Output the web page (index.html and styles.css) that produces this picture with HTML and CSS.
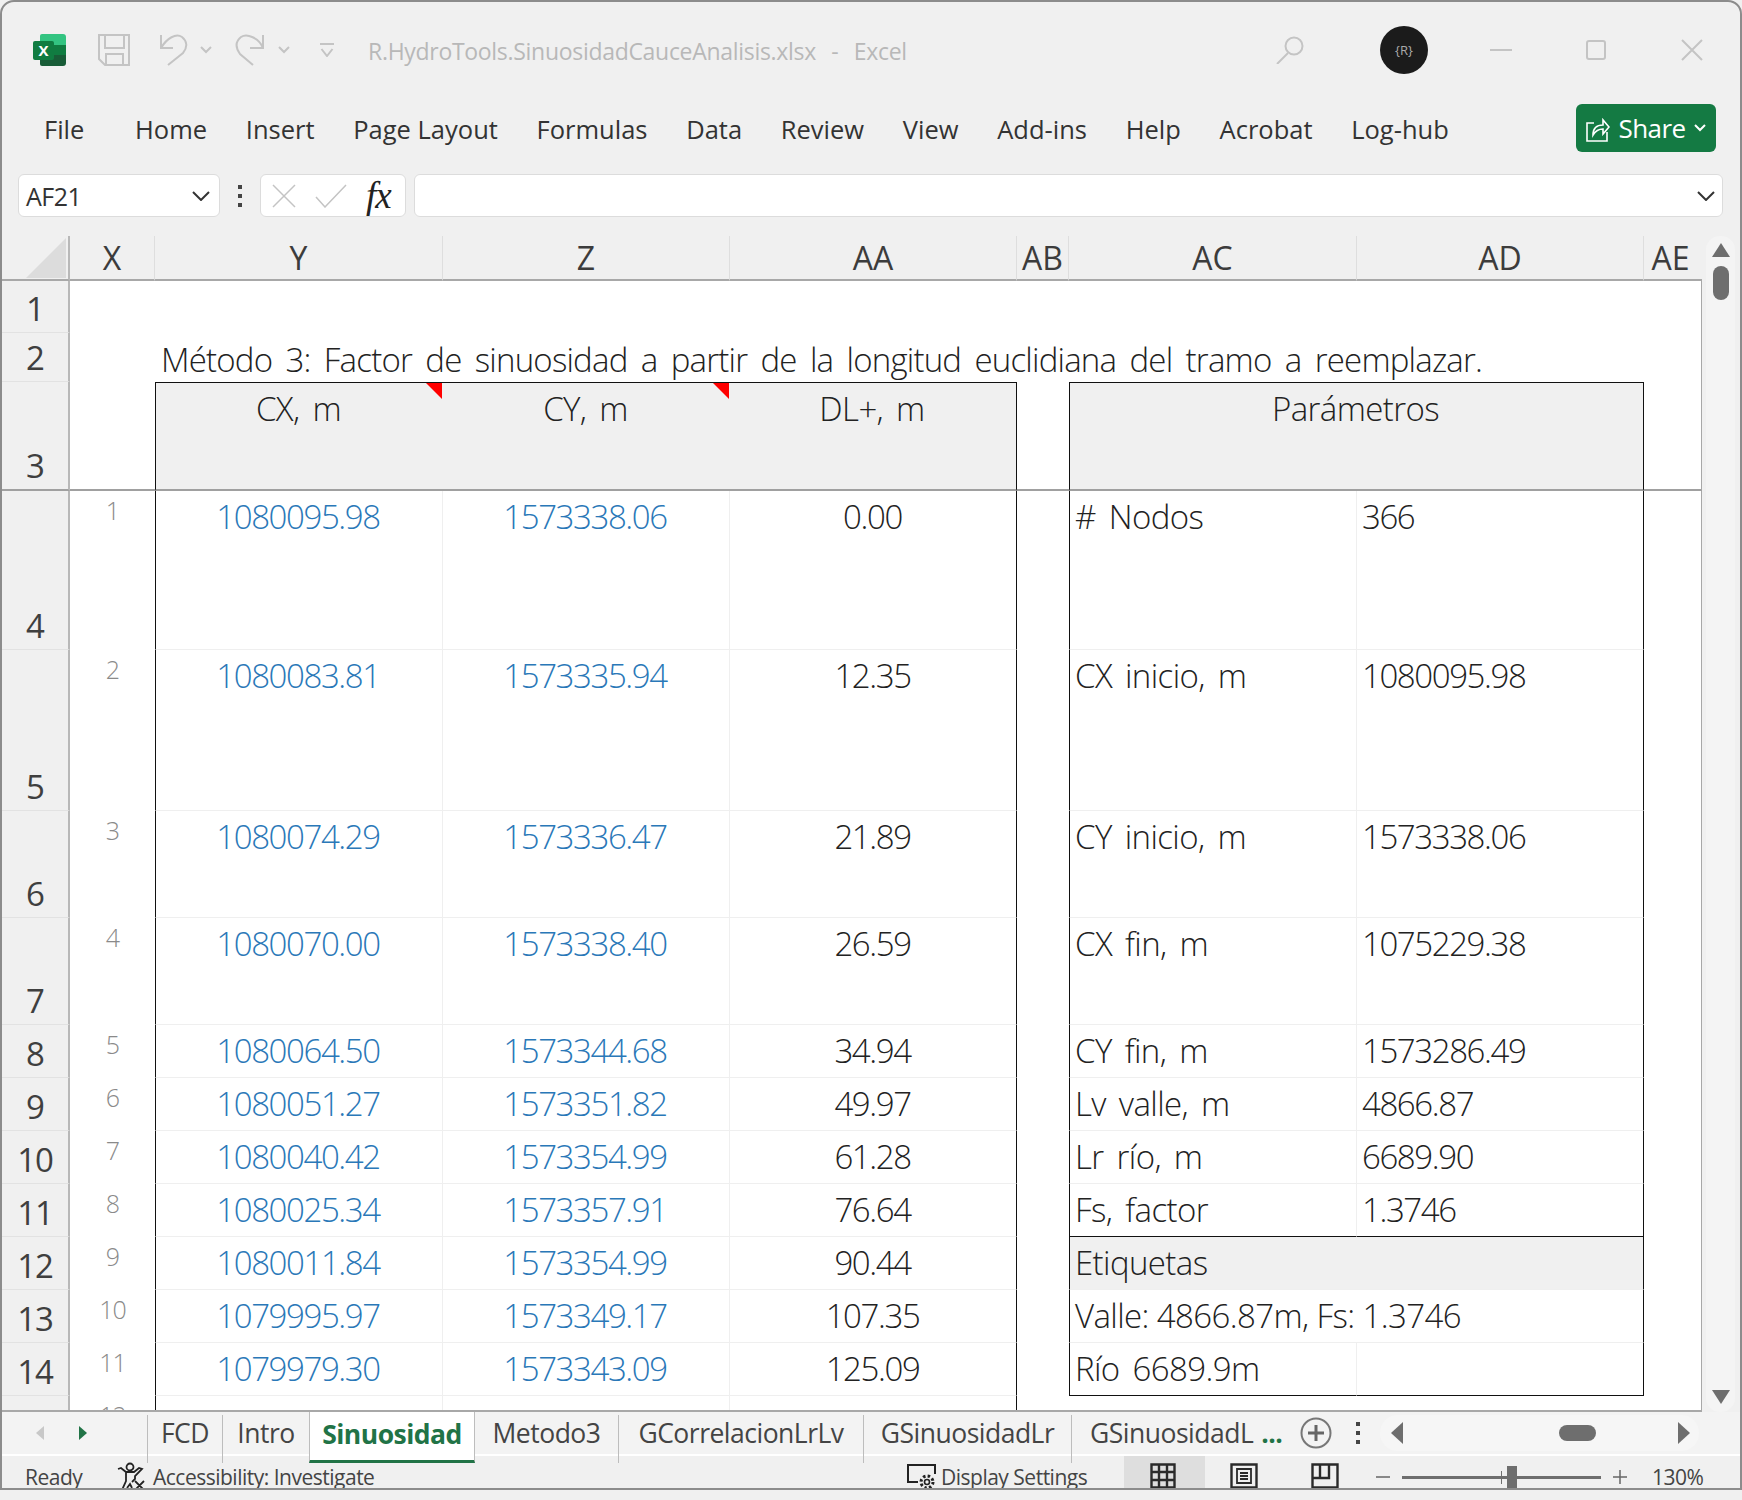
FILE: index.html
```html
<!DOCTYPE html>
<html lang="en">
<head>
<meta charset="utf-8">
<title>Excel</title>
<link rel="stylesheet" href="styles.css">
</head>
<body>
<div class="window">
  <header class="titlebar">
    <svg class="i-excel" viewBox="0 0 34 34" width="34" height="34"><path d="M7 3a2 2 0 0 1 2-2h21a3 3 0 0 1 3 3v8H7z" fill="#33c481"/><rect x="7" y="12" width="26" height="10" fill="#21a366"/><path d="M7 22h26v8a3 3 0 0 1-3 3H9a2 2 0 0 1-2-2z" fill="#185c37"/><rect x="21" y="12" width="12" height="10" fill="#107c41"/><rect x="0" y="8" width="21" height="19" rx="2" fill="#107c41"/><text x="10.500" y="23" text-anchor="middle" class="x-letter">X</text></svg>
    <svg class="i-save" viewBox="0 0 32 32" width="32" height="32"><path d="M1 1h30v30H7l-6-6z M7 1v13h19V1 M8 31V20h17v11" fill="none" stroke="#c4c4c4" stroke-width="2"/></svg>
    <svg class="i-undo" viewBox="0 0 30 32" width="30" height="32"><path d="M3 1v13h12M3 14C9 4 18-1 24 3c5 4 6 10 1 16L10 31" fill="none" stroke="#c4c4c4" stroke-width="2"/></svg>
    <svg class="i-chev" viewBox="0 0 12 8" width="12" height="8"><path d="M1 1l5 5 5-5" fill="none" stroke="#c4c4c4" stroke-width="2"/></svg>
    <svg class="i-redo" viewBox="0 0 30 32" width="30" height="32"><path d="M28 1v13H15M28 14C24 4 12-1 6 3 1 7 0 13 5 20l13 11" fill="none" stroke="#c4c4c4" stroke-width="2"/></svg>
    <svg class="i-chev" viewBox="0 0 12 8" width="12" height="8"><path d="M1 1l5 5 5-5" fill="none" stroke="#c4c4c4" stroke-width="2"/></svg>
    <svg class="i-custom" viewBox="0 0 14 14" width="14" height="14"><path d="M0 1h14M1.500 6L7 13l5.500-7" fill="none" stroke="#c4c4c4" stroke-width="2"/></svg>
    <div class="doc-title">R.HydroTools.SinuosidadCauceAnalisis.xlsx&nbsp; - &nbsp;Excel</div>
    <svg class="i-search" viewBox="0 0 28 28" width="28" height="28"><circle cx="18" cy="10" r="8.500" fill="none" stroke="#c4c4c4" stroke-width="2"/><path d="M12 17L1 28" stroke="#c4c4c4" stroke-width="2"/></svg>
    <div class="avatar">{R}</div>
    <svg class="i-min" viewBox="0 0 22 2" width="22" height="2"><rect width="22" height="2" fill="#c4c4c4"/></svg>
    <svg class="i-max" viewBox="0 0 20 20" width="20" height="20"><rect x="1" y="1" width="18" height="18" rx="2" fill="none" stroke="#c4c4c4" stroke-width="2"/></svg>
    <svg class="i-close" viewBox="0 0 22 22" width="22" height="22"><path d="M1 1l20 20M21 1L1 21" stroke="#c4c4c4" stroke-width="2"/></svg>
  </header>

  <nav class="ribbon">
    <span class="tab tab-file">File</span>
    <span class="tab">Home</span>
    <span class="tab">Insert</span>
    <span class="tab">Page Layout</span>
    <span class="tab">Formulas</span>
    <span class="tab">Data</span>
    <span class="tab">Review</span>
    <span class="tab">View</span>
    <span class="tab">Add-ins</span>
    <span class="tab">Help</span>
    <span class="tab">Acrobat</span>
    <span class="tab">Log-hub</span>
    <button class="share">
      <svg viewBox="0 0 24 28" width="24" height="28"><path d="M8 9H1v18h20v-9" fill="none" stroke="#fff" stroke-width="1.600"/><path d="M7 21c0-7 4-10 10-10V6l6 7-6 7v-5c-4 0-7 1-10 6z" fill="none" stroke="#fff" stroke-width="1.600"/></svg>
      <span>Share</span>
      <svg viewBox="0 0 12 8" width="12" height="8"><path d="M1 1l5 5 5-5" fill="none" stroke="#fff" stroke-width="2"/></svg>
    </button>
  </nav>

  <div class="formula">
    <div class="namebox"><span>AF21</span><svg viewBox="0 0 18 10" width="18" height="10"><path d="M1 1l8 8 8-8" fill="none" stroke="#333" stroke-width="2"/></svg></div>
    <div class="vdots"><i></i><i></i><i></i></div>
    <div class="fxbox">
      <svg viewBox="0 0 24 24" width="24" height="24"><path d="M1 1l22 22M23 1L1 23" stroke="#c4c4c4" stroke-width="1.500"/></svg>
      <svg viewBox="0 0 32 24" width="32" height="24"><path d="M1 13l9 10L31 1" fill="none" stroke="#c4c4c4" stroke-width="1.500"/></svg>
      <span class="fx">fx</span>
    </div>
    <div class="input"><svg viewBox="0 0 18 10" width="18" height="10"><path d="M1 1l8 8 8-8" fill="none" stroke="#333" stroke-width="2"/></svg></div>
  </div>

  <main class="sheet-area">
    <div class="grid-wrap">
      <table class="grid">
        <colgroup><col class="c-rh"><col class="c-x"><col class="c-y"><col class="c-z"><col class="c-aa"><col class="c-ab"><col class="c-ac"><col class="c-ad"><col class="c-ae"></colgroup>
        <thead>
          <tr class="h-head"><th class="corner"></th><th>X</th><th>Y</th><th>Z</th><th>AA</th><th>AB</th><th>AC</th><th>AD</th><th>AE</th></tr>
        </thead>
        <tbody>
          <tr class="h52"><th class="rh">1</th><td colspan="8"></td></tr>
          <tr class="h49"><th class="rh">2</th><td></td><td colspan="7"><div class="title-cell">Método 3: Factor de sinuosidad a partir de la longitud euclidiana del tramo a reemplazar.</div></td></tr>
          <tr class="h109 frozen">
            <th class="rh">3</th><td></td>
            <td class="hd bl bt note">CX, m</td><td class="hd bt note">CY, m</td><td class="hd bt br">DL+, m</td>
            <td></td>
            <td class="hd bl bt br" colspan="2">Parámetros</td>
            <td></td>
          </tr>
          <tr class="h159"><th class="rh">4</th><td class="ix">1</td><td class="n bl">1080095.98</td><td class="n">1573338.06</td><td class="d br">0.00</td><td></td><td class="p bl"># Nodos</td><td class="p num br">366</td><td></td></tr>
          <tr class="h161"><th class="rh">5</th><td class="ix">2</td><td class="n bl">1080083.81</td><td class="n">1573335.94</td><td class="d br">12.35</td><td></td><td class="p bl">CX inicio, m</td><td class="p num br">1080095.98</td><td></td></tr>
          <tr class="h107"><th class="rh">6</th><td class="ix">3</td><td class="n bl">1080074.29</td><td class="n">1573336.47</td><td class="d br">21.89</td><td></td><td class="p bl">CY inicio, m</td><td class="p num br">1573338.06</td><td></td></tr>
          <tr class="h107"><th class="rh">7</th><td class="ix">4</td><td class="n bl">1080070.00</td><td class="n">1573338.40</td><td class="d br">26.59</td><td></td><td class="p bl">CX fin, m</td><td class="p num br">1075229.38</td><td></td></tr>
          <tr class="h53"><th class="rh">8</th><td class="ix">5</td><td class="n bl">1080064.50</td><td class="n">1573344.68</td><td class="d br">34.94</td><td></td><td class="p bl">CY fin, m</td><td class="p num br">1573286.49</td><td></td></tr>
          <tr class="h53"><th class="rh">9</th><td class="ix">6</td><td class="n bl">1080051.27</td><td class="n">1573351.82</td><td class="d br">49.97</td><td></td><td class="p bl">Lv valle, m</td><td class="p num br">4866.87</td><td></td></tr>
          <tr class="h53"><th class="rh">10</th><td class="ix">7</td><td class="n bl">1080040.42</td><td class="n">1573354.99</td><td class="d br">61.28</td><td></td><td class="p bl">Lr río, m</td><td class="p num br">6689.90</td><td></td></tr>
          <tr class="h53"><th class="rh">11</th><td class="ix">8</td><td class="n bl">1080025.34</td><td class="n">1573357.91</td><td class="d br">76.64</td><td></td><td class="p bl bb">Fs, factor</td><td class="p num br bb">1.3746</td><td></td></tr>
          <tr class="h53"><th class="rh">12</th><td class="ix">9</td><td class="n bl">1080011.84</td><td class="n">1573354.99</td><td class="d br">90.44</td><td></td><td class="p bl br shade" colspan="2">Etiquetas</td><td></td></tr>
          <tr class="h53"><th class="rh">13</th><td class="ix">10</td><td class="n bl">1079995.97</td><td class="n">1573349.17</td><td class="d br">107.35</td><td></td><td class="p tight bl br" colspan="2">Valle: 4866.87m, Fs: 1.3746</td><td></td></tr>
          <tr class="h53"><th class="rh">14</th><td class="ix">11</td><td class="n bl">1079979.30</td><td class="n">1573343.09</td><td class="d br">125.09</td><td></td><td class="p bl bb">Río 6689.9m</td><td class="p br bb"></td><td></td></tr>
          <tr class="h53"><th class="rh"></th><td class="ix">12</td><td class="n bl">1079959.16</td><td class="n">1573336.56</td><td class="d br">146.46</td><td></td><td></td><td></td><td></td></tr>
        </tbody>
      </table>
    </div>
    <aside class="vscroll">
      <div class="vtrack">
        <svg viewBox="0 0 18 14" width="18" height="14"><path d="M9 0l9 14H0z" fill="#6e6e6e"/></svg>
        <div class="vthumb"></div>
        <svg class="vdown" viewBox="0 0 18 14" width="18" height="14"><path d="M0 0h18L9 14z" fill="#6e6e6e"/></svg>
      </div>
    </aside>
  </main>

  <div class="tabbar">
    <div class="tabnav">
      <svg viewBox="0 0 8 14" width="8" height="14"><path d="M8 0v14L0 7z" fill="#c8c8c8"/></svg>
      <svg viewBox="0 0 8 14" width="8" height="14"><path d="M0 0v14l8-7z" fill="#217346"/></svg>
    </div>
    <div class="sheets">
      <span class="stab">FCD</span>
      <span class="stab">Intro</span>
      <span class="stab active">Sinuosidad</span>
      <span class="stab">Metodo3</span>
      <span class="stab">GCorrelacionLrLv</span>
      <span class="stab">GSinuosidadLr</span>
      <span class="stab last">GSinuosidadL <b>...</b></span>
    </div>
    <svg class="addsheet" viewBox="0 0 32 32" width="32" height="32"><circle cx="16" cy="16" r="14.500" fill="none" stroke="#777" stroke-width="2"/><path d="M16 8v16M8 16h16" stroke="#666" stroke-width="3"/></svg>
    <div class="vdots tabdots"><i></i><i></i><i></i></div>
    <div class="hscroll">
      <svg viewBox="0 0 12 22" width="12" height="22"><path d="M12 0v22L0 11z" fill="#6e6e6e"/></svg>
      <div class="hthumb"></div>
      <svg viewBox="0 0 12 22" width="12" height="22"><path d="M0 0v22l12-11z" fill="#6e6e6e"/></svg>
    </div>
  </div>

  <footer class="status">
    <span class="ready">Ready</span>
    <svg class="i-access" viewBox="0 0 30 30" width="30" height="30"><circle cx="13" cy="5" r="3.500" fill="none" stroke="#222" stroke-width="1.800"/><path d="M1 7l3-1 5 4h8l5-4 3 1-7 7v3l-3 3M9 10v9L5 28" fill="none" stroke="#222" stroke-width="1.800"/><path d="M18 19l9 9M27 19l-9 9M10 26l3-4 2 4" fill="none" stroke="#222" stroke-width="1.800"/></svg>
    <span class="access-text">Accessibility: Investigate</span>
    <svg class="i-display" viewBox="0 0 30 26" width="30" height="26"><path d="M11 18H1V1h27v9" fill="none" stroke="#222" stroke-width="2"/><circle cx="20" cy="18" r="2.500" fill="none" stroke="#222" stroke-width="1.600"/><circle cx="20" cy="18" r="6" fill="none" stroke="#222" stroke-width="3" stroke-dasharray="2.500 2.200"/></svg>
    <span class="display-text">Display Settings</span>
    <div class="view view-on"><svg viewBox="0 0 26 26" width="26" height="26"><path d="M1.500 1.500h23v23h-23zM9 1v24M17 1v24M1 9h24M1 17h24" fill="none" stroke="#2a2a2a" stroke-width="2.400"/></svg></div>
    <div class="view"><svg viewBox="0 0 28 26" width="28" height="26"><path d="M1.500 1.500h25v23h-25z" fill="none" stroke="#2a2a2a" stroke-width="2.400"/><path d="M7 6h14v14H7zM10 10h8M10 13h8M10 16h8" fill="none" stroke="#2a2a2a" stroke-width="1.800"/></svg></div>
    <div class="view"><svg viewBox="0 0 28 26" width="28" height="26"><path d="M1.500 1.500h25v23h-25zM1 15h17V1M9 1v14" fill="none" stroke="#2a2a2a" stroke-width="2.400"/></svg></div>
    <div class="zoomer">
      <svg viewBox="0 0 14 14" width="14" height="14"><path d="M0 7h14" stroke="#666" stroke-width="1.500"/></svg>
      <div class="slider"><i class="tick"></i><i class="knob"></i></div>
      <svg viewBox="0 0 14 14" width="14" height="14"><path d="M0 7h14M7 0v14" stroke="#666" stroke-width="1.500"/></svg>
    </div>
    <span class="zoom-pct">130%</span>
  </footer>
</div>
</body>
</html>
```

FILE: styles.css
```css
* { box-sizing: border-box; }
html, body { margin: 0; padding: 0; }
body {
  width: 1742px;
  height: 1500px;
  overflow: hidden;
  background: #f0f0f0;
  font-family: "Open Sans", "Noto Sans", sans-serif;
  color: #333;
}
.window {
  height: 1490px;
  border: 2px solid #8c8c8c;
  border-radius: 14px 14px 0 0;
  background: #f0f0f0;
  display: flex;
  flex-direction: column;
  overflow: hidden;
}

/* title bar */
.titlebar {
  height: 96px;
  flex: none;
  display: flex;
  align-items: center;
  padding-left: 31px;
}
.x-letter { font: 700 15px "Open Sans", sans-serif; fill: #fff; }
.i-save { margin-left: 31px; }
.i-undo { margin-left: 28px; }
.i-chev { margin-left: 12px; }
.i-redo { margin-left: 23px; }
.i-redo + .i-chev { margin-left: 13px; }
.i-custom { margin-left: 30px; }
.doc-title {
  margin-left: 34px;
  font-size: 23px;
  letter-spacing: -0.3px;
  word-spacing: 2px;
  color: #b8b8b8;
  white-space: nowrap;
  font-weight: 400;
  padding-top: 2px;
}
.i-search { margin-left: auto; }
.avatar {
  margin-left: 76px;
  width: 48px;
  height: 48px;
  border-radius: 50%;
  background: #1b1b1b;
  color: #aaa;
  font-size: 13px;
  display: flex;
  align-items: center;
  justify-content: center;
}
.i-min { margin-left: 62px; }
.i-max { margin-left: 74px; }
.i-close { margin-left: 75px; margin-right: 37px; }

/* ribbon */
.ribbon {
  height: 64px;
  flex: none;
  display: flex;
  align-items: center;
  gap: 38.700px;
  padding: 0 0 3px 42px;
  font-size: 25.500px;
  color: #333;
}
.tab { white-space: nowrap; }
.tab-file { margin-right: 12px; }
.share {
  margin-left: auto;
  margin-right: 24px;
  margin-top: -1px;
  width: 140px;
  height: 48px;
  border: 0;
  border-radius: 6px;
  background: #147a43;
  color: #fff;
  font: 400 26px "Open Sans", sans-serif;
  letter-spacing: -0.6px;
  display: flex;
  align-items: center;
  justify-content: center;
  gap: 9px;
  padding: 0;
}

/* formula bar */
.formula {
  height: 55px;
  flex: none;
  padding-top: 12px;
  display: flex;
  align-items: stretch;
}
.namebox, .fxbox, .input {
  height: 43px;
  background: #fff;
  border: 1px solid #dcdcdc;
  border-radius: 6px;
  display: flex;
  align-items: center;
}
.namebox {
  width: 202px;
  margin-left: 16px;
  padding: 0 9px 0 7px;
  justify-content: space-between;
  font-size: 25px;
  letter-spacing: -0.5px;
  color: #333;
}
.vdots {
  display: flex;
  flex-direction: column;
  justify-content: center;
  gap: 5px;
  width: 40px;
  align-items: center;
}
.vdots i { width: 4px; height: 4px; background: #444; display: block; }
.fxbox {
  width: 146px;
  padding: 0 8px 0 11px;
  gap: 19px;
}
.fx {
  font: italic 400 37px "Liberation Serif", serif;
  color: #222;
  letter-spacing: -1px;
}
.input {
  margin-left: 8px;
  width: 1309px;
  justify-content: flex-end;
  padding-right: 7px;
}

/* sheet */
.sheet-area {
  height: 1195px;
  flex: none;
  padding-top: 19px;
  display: flex;
}
.grid-wrap {
  width: 1700px;
  height: 1176px;
  overflow: hidden;
  flex: none;
  background: #f0f0f0;
  border-bottom: 2px solid #a8a8a8;
}
.grid {
  width: 1700px;
  table-layout: fixed;
  border-collapse: separate;
  border-spacing: 0;
  background: #fff;
  font-size: 33px;
  font-weight: 300;
  letter-spacing: -1.4px;
  color: #222;
}
.c-rh { width: 68px; }
.c-x { width: 85px; }
.c-y { width: 288px; }
.c-z { width: 287px; }
.c-aa { width: 287px; }
.c-ab { width: 52px; }
.c-ac { width: 288px; }
.c-ad { width: 287px; }
.c-ae { width: 58px; }

.h-head { height: 45px; }
.h52 { height: 52px; }
.h53 { height: 53px; }
.h49 { height: 49px; }
.h109 { height: 109px; }
.h159 { height: 159px; }
.h161 { height: 161px; }
.h107 { height: 107px; }

thead th {
  background: #f0f0f0;
  border-right: 1px solid #dedede;
  border-bottom: 2px solid #a8a8a8;
  font-size: 32px;
  font-weight: 400;
  letter-spacing: 0;
  color: #3c3c3c;
  padding: 0;
  line-height: 43px;
}
thead th:last-child { border-right: 0; padding-right: 5px; }
thead th.corner { position: relative; border-right: 2px solid #b8b8b8; }
thead th.corner::after {
  content: "";
  position: absolute;
  right: 2px;
  top: 2px;
  width: 40px;
  height: 40px;
  background: #dcdcdc;
  clip-path: polygon(100% 0, 100% 100%, 0 100%);
}
td { padding: 0; vertical-align: top; line-height: 52px; white-space: nowrap; }
tbody td:last-child { border-right: 1px solid #a8a8a8; }
.rh {
  background: #f0f0f0;
  border-right: 2px solid #b8b8b8;
  border-bottom: 1px solid #e2e2e2;
  vertical-align: bottom;
  font-size: 33px;
  font-weight: 400;
  letter-spacing: -1px;
  color: #3f3f3f;
  line-height: 47px;
  padding: 0;
}
.title-cell {
  height: 49px;
  line-height: 53px;
  padding-left: 6px;
  letter-spacing: -0.8px;
  word-spacing: 5.500px;
  color: #222;
}
.hd { background: #f0f0f0; text-align: center; letter-spacing: -0.6px; word-spacing: 5px; font-kerning: none; padding-right: 2px; }
.ix {
  text-align: center;
  font-size: 25px;
  line-height: 38px;
  color: #8a8a8a;
  letter-spacing: -1px;
}
.n, .d, .p {
  border-right: 1px solid #efefef;
  border-bottom: 1px solid #efefef;
}
.n { text-align: center; color: #2a78b8; padding-right: 2px; }
.d { text-align: center; padding-right: 1px; }
.p { padding-left: 5px; letter-spacing: -0.6px; word-spacing: 5px; font-kerning: none; }
.p.num { letter-spacing: -1.4px; word-spacing: 0; }
.p.tight { word-spacing: 0; }
.shade { background: #f0f0f0; }
.bl { border-left: 1px solid #111; }
.br { border-right: 1px solid #111; }
.bt { border-top: 1px solid #111; }
.bb { border-bottom: 1px solid #111; }
.frozen > th, .frozen > td { border-bottom: 2px solid #a0a0a0; }
.note { position: relative; }
.note::after {
  content: "";
  position: absolute;
  right: 1px;
  top: 0;
  width: 16px;
  height: 16px;
  background: #f00;
  clip-path: polygon(0 0, 100% 0, 100% 100%);
}

/* vertical scrollbar */
.vscroll { width: 38px; flex: none; }
.vtrack {
  height: 100%;
  margin: 0 0 0 4px;
  width: 29px;
  background: #f4f4f4;
  border-radius: 14px;
  display: flex;
  flex-direction: column;
  align-items: center;
  padding: 7px 0 8px;
}
.vthumb { width: 16px; height: 34px; margin-top: 9px; background: #6e6e6e; border-radius: 8px; }
.vdown { margin-top: auto; }

/* tabs */
.tabbar {
  height: 44px;
  flex: none;
  display: flex;
  align-items: stretch;
  background: #f3f3f3;
  border-bottom: 2px solid #fff;
  font-size: 26.500px;
  letter-spacing: -0.5px;
  color: #444;
}
.tabnav {
  width: 145px;
  flex: none;
  display: flex;
  align-items: center;
  gap: 35px;
  padding-left: 34px;
}
.sheets {
  display: grid;
  grid-template-columns: 75px 87px 166px 143px 245px 208px 230px;
  width: 1154px;
  flex: none;
  padding-bottom: 3px;
}
.stab {
  display: flex;
  align-items: center;
  justify-content: center;
  border-left: 1px solid #bdbdbd;
  white-space: nowrap;
  margin-top: 3px;
  padding-bottom: 12px;
}
.stab.active {
  background: #fff;
  color: #217346;
  font-weight: 700;
  letter-spacing: -0.5px;
  margin: 0;
  border-right: 1px solid #bdbdbd;
  border-bottom: 3px solid #217346;
  padding-bottom: 4px;
}
.stab.active + .stab { border-left: 0; }
.stab.last { justify-content: flex-start; padding-left: 18px; }
.stab b { color: #217346; margin-left: 8px; }
.addsheet { flex: none; margin: 5px 0 0 -1px; align-self: flex-start; }
.tabdots { width: 40px; flex: none; margin-left: 6px; }
.hscroll {
  width: 319px;
  flex: none;
  margin: 3px 0 3px 2px;
  background: #f6f6f6;
  border-radius: 18px;
  display: flex;
  align-items: center;
  padding: 0 9px 0 11px;
  justify-content: space-between;
}
.hthumb {
  width: 37px;
  height: 16px;
  border-radius: 8px;
  background: #6e6e6e;
  margin-left: 74px;
}

/* status bar */
.status {
  height: 32px;
  flex: none;
  overflow: hidden;
  display: flex;
  align-items: flex-start;
  font-size: 21px;
  letter-spacing: -0.5px;
  color: #444;
  line-height: 30px;
  padding-top: 6px;
}
.ready { margin-left: 23px; width: 92px; flex: none; }
.i-access { flex: none; margin: 0 6px 0 0; }
.access-text { width: 754px; flex: none; }
.i-display { flex: none; margin: 2px 4px 0 0; }
.display-text { width: 183px; flex: none; }
.view {
  width: 81px;
  height: 32px;
  margin-top: -6px;
  padding: 7px 3px 0 0;
  flex: none;
  display: flex;
  align-items: flex-start;
  justify-content: center;
}
.view-on { background: #dedede; }
.zoomer {
  flex: none;
  display: flex;
  align-items: center;
  gap: 12px;
  margin: 4px 0 0 9px;
  height: 22px;
}
.slider {
  width: 199px;
  height: 3px;
  background: #6e6e6e;
  position: relative;
}
.knob {
  position: absolute;
  left: 105px;
  top: -10px;
  width: 10px;
  height: 23px;
  background: #6e6e6e;
}
.tick {
  position: absolute;
  left: 99px;
  top: -5px;
  width: 1px;
  height: 13px;
  background: #6e6e6e;
}
.zoom-pct { margin-left: 25px; flex: none; }
```
